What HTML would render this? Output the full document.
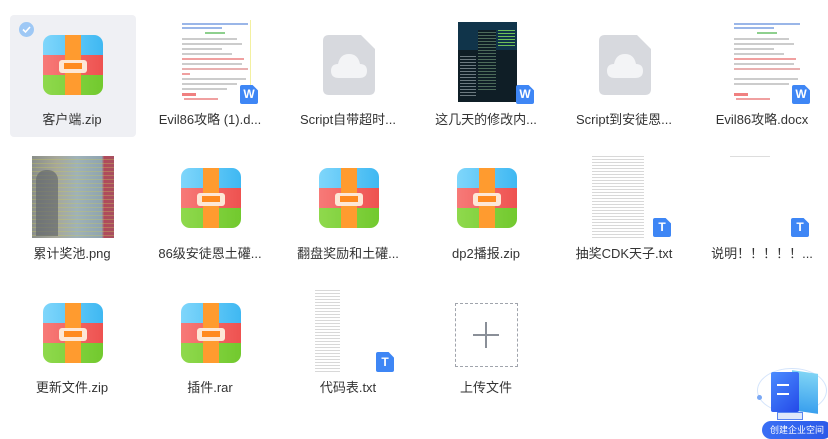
<!DOCTYPE html>
<html><head><meta charset="utf-8">
<style>
*{margin:0;padding:0;box-sizing:border-box}
body{width:828px;height:437px;background:#fff;position:relative;overflow:hidden;font-family:"Liberation Sans","Noto Sans CJK SC",sans-serif}
.a{position:absolute}
.lbl{position:absolute;width:138px;text-align:center;font-size:13px;color:#333;line-height:16px;white-space:nowrap}
.zip{position:absolute;width:60px;height:60px}
.doc{position:absolute;width:72px;height:83px;background:#fff;overflow:hidden}
.ln{position:absolute;height:2px}
.badge{position:absolute;width:18px;height:19px;background:#3e86f5;border-radius:2px;color:#fff;font-size:12px;font-weight:bold;text-align:center;line-height:19px;clip-path:polygon(0 0,70% 0,100% 28%,100% 100%,0 100%)}
.txt{position:absolute;background:repeating-linear-gradient(#fff 0 1px,#d8d8d8 1px 2px,#fff 2px 3px)}
.cloud{position:absolute;width:52px;height:60px}
</style></head><body>

<svg width="0" height="0" style="position:absolute"><defs>
<linearGradient id="gt" x1="0" x2="1"><stop offset="0" stop-color="#7fd6fb"/><stop offset="1" stop-color="#3fb8f2"/></linearGradient>
<linearGradient id="gr" x1="0" x2="1"><stop offset="0" stop-color="#f77a78"/><stop offset="1" stop-color="#ee5250"/></linearGradient>
<linearGradient id="gg" x1="0" x2="1"><stop offset="0" stop-color="#8fd94d"/><stop offset="1" stop-color="#72c92e"/></linearGradient>
<g id="z">
<clipPath id="c"><rect width="60" height="60" rx="9"/></clipPath>
<g clip-path="url(#c)">
<rect width="60" height="20" fill="url(#gt)"/>
<rect y="20" width="60" height="20" fill="url(#gr)"/>
<rect y="40" width="60" height="20" fill="url(#gg)"/>
<rect x="22" width="16" height="60" fill="#ff9b2f"/>
<rect x="16" y="25" width="28" height="13" rx="3" fill="#fde7d6"/>
<rect x="21" y="28" width="18" height="6" fill="#ff8a1f"/>
</g></g>
<g id="cl">
<path d="M6 0H38L52 14V54Q52 60 46 60H6Q0 60 0 54V6Q0 0 6 0Z" fill="#d7d9de"/>
<path d="M16 43Q8 43 8 36Q8 29 15 29Q17 19 26 19Q35 19 37 29Q44 29 44 36Q44 43 36 43Z" fill="#f3f4f6"/>
</g>
</defs></svg>

<div class="a" style="left:10px;top:15px;width:126px;height:122px;background:#eff0f4;border-radius:4px"></div>
<div class="a" style="left:19px;top:22px;width:15px;height:15px;border-radius:50%;background:#9ec8f5"></div>
<svg class="a" style="left:19px;top:22px" width="15" height="15"><path d="M4 7.5L6.5 10L11 5" stroke="#fff" stroke-width="1.6" fill="none"/></svg>

<svg class="zip" style="left:43px;top:35px"><use href="#z"/></svg>
<div class="lbl" style="left:3px;top:112px">客户端.zip</div>

<div class="doc" style="left:180px;top:20px">
<div class="ln" style="left:2px;top:3px;width:66px;background:#9ab6e8"></div>
<div class="ln" style="left:2px;top:7px;width:40px;background:#9ab6e8"></div>
<div class="ln" style="left:25px;top:12px;width:20px;background:#8ed08e"></div>
<div class="ln" style="left:2px;top:18px;width:55px;background:#ccc"></div>
<div class="ln" style="left:2px;top:23px;width:60px;background:#ccc"></div>
<div class="ln" style="left:2px;top:28px;width:40px;background:#ccc"></div>
<div class="ln" style="left:2px;top:33px;width:50px;background:#ccc"></div>
<div class="ln" style="left:2px;top:38px;width:62px;background:#f0a0a0"></div>
<div class="ln" style="left:2px;top:43px;width:60px;background:#ccc"></div>
<div class="ln" style="left:2px;top:48px;width:66px;background:#e8b0b0"></div>
<div class="ln" style="left:2px;top:53px;width:8px;background:#f0a0a0"></div>
<div class="ln" style="left:2px;top:58px;width:64px;background:#ccc"></div>
<div class="ln" style="left:2px;top:63px;width:55px;background:#ccc"></div>
<div class="ln" style="left:2px;top:68px;width:45px;background:#ccc"></div>
<div class="ln" style="left:2px;top:73px;width:14px;height:3px;background:#f08080"></div>
<div class="ln" style="left:4px;top:78px;width:34px;background:#f0a0a0"></div>
<div class="a" style="left:70px;top:0;width:1px;height:83px;background:#f3f0a0"></div>
</div>
<div class="badge" style="left:240px;top:85px">W</div>
<div class="lbl" style="left:141px;top:112px">Evil86攻略 (1).d...</div>

<svg class="cloud" style="left:323px;top:35px"><use href="#cl"/></svg>
<div class="lbl" style="left:279px;top:112px">Script自带超时...</div>

<div class="a" style="left:458px;top:22px;width:59px;height:80px;background:#0f1e26"></div>
<div class="a" style="left:458px;top:22px;width:59px;height:28px;background:#10344a"></div>
<div class="a" style="left:478px;top:30px;width:18px;height:60px;background:repeating-linear-gradient(#0f1e26 0 2px,#4d6b5a 2px 3px)"></div>
<div class="a" style="left:498px;top:28px;width:17px;height:18px;background:repeating-linear-gradient(#10344a 0 2px,#6fbf58 2px 3px)"></div>
<div class="a" style="left:460px;top:54px;width:16px;height:44px;background:repeating-linear-gradient(#0f1e26 0 2px,#6c7a80 2px 3px)"></div>
<div class="badge" style="left:516px;top:85px">W</div>
<div class="lbl" style="left:417px;top:112px">这几天的修改内...</div>

<svg class="cloud" style="left:599px;top:35px"><use href="#cl"/></svg>
<div class="lbl" style="left:555px;top:112px">Script到安徒恩...</div>

<div class="doc" style="left:732px;top:20px">
<div class="ln" style="left:2px;top:3px;width:66px;background:#9ab6e8"></div>
<div class="ln" style="left:2px;top:7px;width:40px;background:#9ab6e8"></div>
<div class="ln" style="left:25px;top:12px;width:20px;background:#8ed08e"></div>
<div class="ln" style="left:2px;top:18px;width:55px;background:#ccc"></div>
<div class="ln" style="left:2px;top:23px;width:60px;background:#ccc"></div>
<div class="ln" style="left:2px;top:28px;width:40px;background:#ccc"></div>
<div class="ln" style="left:2px;top:33px;width:50px;background:#ccc"></div>
<div class="ln" style="left:2px;top:38px;width:62px;background:#f0a0a0"></div>
<div class="ln" style="left:2px;top:43px;width:60px;background:#ccc"></div>
<div class="ln" style="left:2px;top:48px;width:66px;background:#e8b0b0"></div>
<div class="ln" style="left:2px;top:58px;width:64px;background:#ccc"></div>
<div class="ln" style="left:2px;top:63px;width:55px;background:#ccc"></div>
<div class="ln" style="left:2px;top:73px;width:14px;height:3px;background:#f08080"></div>
<div class="ln" style="left:4px;top:78px;width:34px;background:#f0a0a0"></div>
</div>
<div class="badge" style="left:792px;top:85px">W</div>
<div class="lbl" style="left:693px;top:112px">Evil86攻略.docx</div>

<div class="a" style="left:32px;top:156px;width:82px;height:82px;background:linear-gradient(90deg,#8a8f8a 0,#a6a79a 30%,#9fb2b8 55%,#8fa4b0 85%,#b04a5a 88%,#a85060 100%)"></div>
<div class="a" style="left:32px;top:156px;width:82px;height:82px;background:repeating-linear-gradient(rgba(255,255,255,0) 0 3px,rgba(200,200,90,.35) 3px 4px)"></div>
<div class="a" style="left:36px;top:170px;width:22px;height:66px;background:#5a5f68;border-radius:10px 10px 0 0;opacity:.6"></div>
<div class="lbl" style="left:3px;top:246px">累计奖池.png</div>

<svg class="zip" style="left:181px;top:168px"><use href="#z"/></svg>
<div class="lbl" style="left:141px;top:246px">86级安徒恩土礶...</div>
<svg class="zip" style="left:319px;top:168px"><use href="#z"/></svg>
<div class="lbl" style="left:279px;top:246px">翻盘奖励和土礶...</div>
<svg class="zip" style="left:457px;top:168px"><use href="#z"/></svg>
<div class="lbl" style="left:417px;top:246px">dp2播报.zip</div>

<div class="txt" style="left:592px;top:155px;width:52px;height:83px"></div>
<div class="badge" style="left:653px;top:218px">T</div>
<div class="lbl" style="left:555px;top:246px">抽奖CDK天子.txt</div>

<div class="a" style="left:730px;top:156px;width:40px;height:1px;background:#ddd"></div>
<div class="badge" style="left:791px;top:218px">T</div>
<div class="lbl" style="left:693px;top:246px">说明！！！！！...</div>

<svg class="zip" style="left:43px;top:303px"><use href="#z"/></svg>
<div class="lbl" style="left:3px;top:380px">更新文件.zip</div>
<svg class="zip" style="left:181px;top:303px"><use href="#z"/></svg>
<div class="lbl" style="left:141px;top:380px">插件.rar</div>

<div class="txt" style="left:315px;top:289px;width:25px;height:83px"></div>
<div class="badge" style="left:376px;top:352px;height:20px;line-height:20px">T</div>
<div class="lbl" style="left:279px;top:380px">代码表.txt</div>

<div class="a" style="left:455px;top:303px;width:63px;height:64px;border:1px dashed #a0a4ac"></div>
<div class="a" style="left:473px;top:334px;width:26px;height:2px;background:#8a8f98"></div>
<div class="a" style="left:485px;top:322px;width:2px;height:26px;background:#8a8f98"></div>
<div class="lbl" style="left:417px;top:380px">上传文件</div>

<div class="a" style="left:757px;top:368px;width:70px;height:45px;border:1px solid #d4e4fb;border-radius:50%"></div>
<div class="a" style="left:757px;top:395px;width:5px;height:5px;border-radius:50%;background:#7aa8f5"></div>
<div class="a" style="left:792px;top:372px;width:26px;height:40px;background:linear-gradient(#7fd4f5,#3aa0ee);transform:skewY(8deg)"></div>
<div class="a" style="left:771px;top:372px;width:28px;height:40px;background:linear-gradient(135deg,#4a8cff,#2449e8);border-radius:2px"></div>
<div class="a" style="left:777px;top:384px;width:12px;height:2px;background:#fff"></div>
<div class="a" style="left:777px;top:393px;width:12px;height:2px;background:#fff"></div>
<div class="a" style="left:777px;top:412px;width:26px;height:8px;background:#dfe8fa;border:1px solid #5a86f0"></div>
<div class="a" style="left:762px;top:421px;width:70px;height:18px;border-radius:9px;background:linear-gradient(90deg,#3a6ff5,#2a58e8);color:#fff;font-size:9px;line-height:18px;padding-left:8px;white-space:nowrap">创建企业空间</div>

</body></html>
